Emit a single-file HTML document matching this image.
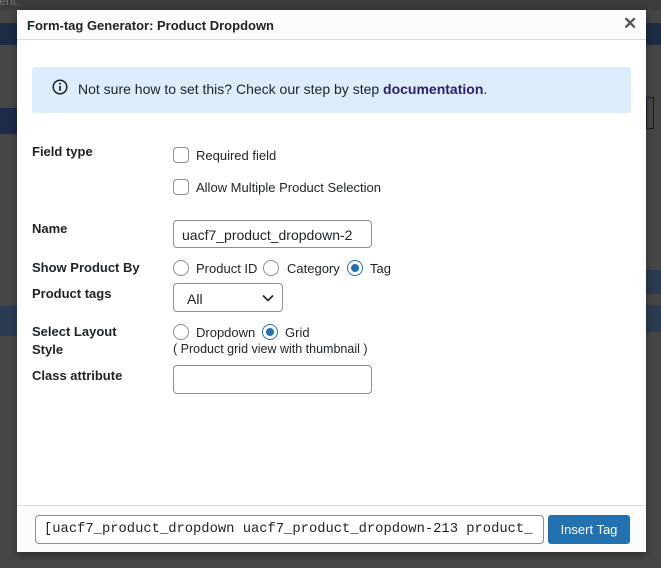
<!DOCTYPE html>
<html><head><style>
*{box-sizing:border-box;margin:0;padding:0}
body{width:661px;height:568px;background:#464646;position:relative;overflow:hidden;font-family:"Liberation Sans",sans-serif;font-size:13px;color:#1d2327}
.abs{position:absolute}
.modal{left:17px;top:10px;width:629px;height:542px;background:#fff;box-shadow:0 3px 8px rgba(0,0,0,.4)}
.hdr{left:0;top:0;width:629px;height:30px;background:#fcfcfc;border-bottom:1px solid #dcdcde}
.lbl{font-weight:bold;font-size:13px;left:15px}
.cb{width:16px;height:16px;border:1px solid #8c8f94;border-radius:4px;background:#fff}
.rd{width:16px;height:16px;border:1px solid #8c8f94;border-radius:50%;background:#fff}
.rd.on::after{content:"";position:absolute;left:3px;top:3px;width:8px;height:8px;border-radius:50%;background:#2271b1}
.rd.on{border-color:#2271b1}
.inp{border:1px solid #8c8f94;border-radius:4px;background:#fff}
</style></head><body>
<div class="abs" style="left:0;top:0;width:661px;height:10px;background:#3c3c3c"></div>
<div class="abs" style="left:0;top:0;font-size:12px;color:#777;left:-4px;top:-6px">tent:</div>
<div class="abs" style="left:0;top:23px;width:661px;height:22px;background:#1c2c44"></div>
<div class="abs" style="left:0;top:108px;width:17px;height:26px;background:#1d2b48"></div>
<div class="abs" style="left:646px;top:97px;width:8px;height:32px;border:1px solid #1a1a2e"></div>
<div class="abs" style="left:646px;top:270px;width:15px;height:24px;background:#2a3b52"></div>
<div class="abs" style="left:646px;top:305px;width:15px;height:27px;background:#2a3b52"></div>
<div class="abs" style="left:0;top:306px;width:17px;height:30px;background:#2a3b52"></div>
<div class="abs modal">
 <div class="abs hdr"><div class="abs" style="left:10px;top:8px;font-weight:bold;font-size:13px">Form-tag Generator: Product Dropdown</div>
  <div class="abs" style="left:606px;top:4px;font-size:17px;font-weight:bold;color:#50575e">✕</div></div>
 <div class="abs" style="left:15px;top:57px;width:599px;height:46px;background:#dcecfb;border-radius:3px">
  <svg class="abs" style="left:20px;top:12px" width="16" height="16" viewBox="0 0 16 16"><circle cx="8" cy="8" r="6.8" fill="none" stroke="#1d2327" stroke-width="1.5"/><circle cx="8" cy="4.8" r="1" fill="#1d2327"/><path d="M8 7v4.8" stroke="#1d2327" stroke-width="1.7"/></svg>
  <div class="abs" style="left:46px;top:14px;font-size:14px">Not sure how to set this? Check our step by step <b style="color:#2f1c6a">documentation</b>.</div>
 </div>
 <div class="abs lbl" style="top:134px">Field type</div>
 <div class="abs cb" style="left:156px;top:137px"></div><div class="abs" style="left:179px;top:138px">Required field</div>
 <div class="abs cb" style="left:156px;top:169px"></div><div class="abs" style="left:179px;top:170px">Allow Multiple Product Selection</div>
 <div class="abs lbl" style="top:211px">Name</div>
 <div class="abs inp" style="left:156px;top:210px;width:199px;height:28px"><div class="abs" style="left:8px;top:6px;font-size:14px">uacf7_product_dropdown-2</div></div>
 <div class="abs lbl" style="top:250px">Show Product By</div>
 <div class="abs rd" style="left:156px;top:250px"></div><div class="abs" style="left:179px;top:251px">Product ID</div>
 <div class="abs rd" style="left:246px;top:250px"></div><div class="abs" style="left:270px;top:251px">Category</div>
 <div class="abs rd on" style="left:330px;top:250px"></div><div class="abs" style="left:353px;top:251px">Tag</div>
 <div class="abs lbl" style="top:276px">Product tags</div>
 <div class="abs inp" style="left:156px;top:273px;width:110px;height:29px"><div class="abs" style="left:13px;top:7px;font-size:14px">All</div>
  <svg class="abs" style="left:88px;top:10px" width="12" height="8" viewBox="0 0 12 8"><path d="M1 1.5L6 6.5L11 1.5" fill="none" stroke="#1d2327" stroke-width="1.6"/></svg></div>
 <div class="abs lbl" style="top:314px">Select Layout</div>
 <div class="abs lbl" style="top:332px">Style</div>
 <div class="abs rd" style="left:156px;top:314px"></div><div class="abs" style="left:179px;top:315px">Dropdown</div>
 <div class="abs rd on" style="left:245px;top:314px"></div><div class="abs" style="left:268px;top:315px">Grid</div>
 <div class="abs" style="left:156px;top:332px;font-size:12.5px">( Product grid view with thumbnail )</div>
 <div class="abs lbl" style="top:358px">Class attribute</div>
 <div class="abs inp" style="left:156px;top:355px;width:199px;height:29px"></div>
 <div class="abs" style="left:0;top:495px;width:629px;height:47px;background:#fcfcfc;border-top:1px solid #dcdcde">
  <div class="abs inp" style="left:18px;top:9px;width:509px;height:29px;overflow:hidden"><div class="abs" style="left:8px;top:6px;font-family:'Liberation Mono',monospace;font-size:13.8px;white-space:nowrap">[uacf7_product_dropdown uacf7_product_dropdown-213 product_</div></div>
  <div class="abs" style="left:531px;top:9px;width:82px;height:29px;background:#2271b1;border-radius:3px;color:#fff;font-size:13px;text-align:center;line-height:29px">Insert Tag</div>
 </div>
</div>
</body></html>
